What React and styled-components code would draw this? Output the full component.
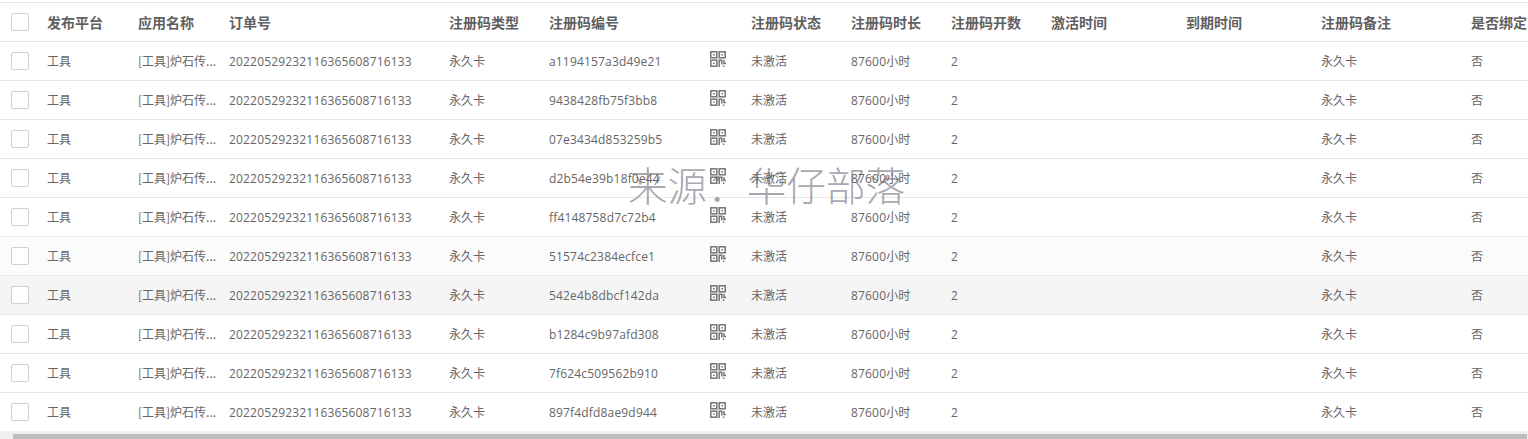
import React from 'react'
import styled, { createGlobalStyle } from 'styled-components'

const GlobalStyle = createGlobalStyle`
  html, body {
    margin: 0;
    padding: 0;
    height: 439px;
    overflow: hidden;
    background: #fff;
  }
`
const Page = styled.div`
  position: relative;
  width: 1528px;
  height: 439px;
  overflow: hidden;
  padding-top: 2px;
  box-sizing: border-box;
  font-family: "Open Sans", "Noto Sans CJK SC", sans-serif;
  font-size: 12px;
  color: #666;
`
const Table = styled.table`
  width: 1600px;
  table-layout: fixed;
  border-collapse: separate;
  border-spacing: 0;
  border-top: 1px solid #e8e8e8;
`
const HeadCell = styled.th`
  height: 39px;
  padding: 0 0 0 12px;
  box-sizing: border-box;
  border-bottom: 1px solid #e8e8e8;
  text-align: left;
  font-family: "Noto Sans CJK SC", sans-serif;
  font-size: 14px;
  font-weight: 700;
  color: #5f5f5f;
  white-space: nowrap;
  overflow: hidden;
`
const Row = styled.tr`
  background: ${p => p.$tone || '#fff'};
`
const Cell = styled.td`
  height: 39px;
  padding: 0 0 0 12px;
  box-sizing: border-box;
  border-bottom: 1px solid #e8e8e8;
  white-space: nowrap;
  overflow: hidden;
  letter-spacing: 0.17px;
`
const Cjk = styled.span`
  letter-spacing: 0;
  font-family: "Noto Sans CJK SC", sans-serif;
`
const CodeCell = styled.div`
  display: flex;
  align-items: center;
  justify-content: space-between;
  padding-right: 13px;
`
const BoxCell = styled.td`
  height: 39px;
  padding: 0 0 0 11px;
  box-sizing: border-box;
  border-bottom: 1px solid #e8e8e8;
`
const BoxHead = styled(BoxCell).attrs({ as: 'th' })`
  text-align: left;
  font-weight: normal;
`
const Check = styled.span`
  display: block;
  width: 18px;
  height: 18px;
  box-sizing: border-box;
  border: 1px solid #d0d0d0;
  border-radius: 2px;
  background: #fff;
`
const QrSvg = styled.svg`
  display: block;
  flex: none;
  margin-top: -4px;
`
const Watermark = styled.div`
  position: absolute;
  left: 628px;
  top: 160px;
  font-family: "Noto Sans CJK SC", sans-serif;
  font-size: 39.6px;
  line-height: 48px;
  font-weight: 300;
  color: rgba(110, 110, 125, 0.62);
  white-space: nowrap;
  pointer-events: none;
`
const Scrollbar = styled.div`
  position: absolute;
  left: 0;
  right: 0;
  bottom: 0;
  height: 8px;
  padding: 3px 1px 0 13px;
  box-sizing: border-box;
  background: #efefef;
`
const Thumb = styled.div`
  height: 100%;
  background: #bdbdbd;
`

const QrIcon = () => (
  <QrSvg width="16" height="16" viewBox="0 0 16 16" fill="none" stroke="#757575" strokeWidth="1.5">
    <rect x="0.8" y="0.8" width="6" height="6" />
    <rect x="9.2" y="0.8" width="6" height="6" />
    <rect x="0.8" y="9.2" width="6" height="6" />
    <path d="M3 3h1.6v1.6H3zM11.4 3H13v1.6h-1.6zM3 11.4h1.6V13H3z" fill="#757575" stroke="none" />
    <path d="M9.2 16V9.2h2.6v4.4M14 9v3.6h2M13.6 14.4V16" />
  </QrSvg>
)

const columns = [35, 91, 91, 220, 100, 202, 100, 100, 100, 135, 135, 150, 141]
const heads = ['发布平台', '应用名称', '订单号', '注册码类型', '注册码编号', '注册码状态', '注册码时长', '注册码开数', '激活时间', '到期时间', '注册码备注', '是否绑定']
const codes = [
  'a1194157a3d49e21',
  '9438428fb75f3bb8',
  '07e3434d853259b5',
  'd2b54e39b18f0e44',
  'ff4148758d7c72b4',
  '51574c2384ecfce1',
  '542e4b8dbcf142da',
  'b1284c9b97afd308',
  '7f624c509562b910',
  '897f4dfd8ae9d944'
]
const tones = { 5: '#fbfbfb', 6: '#f5f5f5' }

const App = () => {
  return (
    <Page>
      <GlobalStyle />
      <Table>
        <colgroup>
          {columns.map((w, i) => <col key={i} style={{ width: w }} />)}
        </colgroup>
        <thead>
          <tr>
            <BoxHead><Check /></BoxHead>
            {heads.map(h => <HeadCell key={h}>{h}</HeadCell>)}
          </tr>
        </thead>
        <tbody>
          {codes.map((code, i) => (
            <Row key={code} $tone={tones[i]}>
              <BoxCell><Check /></BoxCell>
              <Cell><Cjk>工具</Cjk></Cell>
              <Cell><Cjk>[工具]炉石传...</Cjk></Cell>
              <Cell>20220529232116365608716133</Cell>
              <Cell><Cjk>永久卡</Cjk></Cell>
              <Cell>
                <CodeCell>{code}<QrIcon /></CodeCell>
              </Cell>
              <Cell><Cjk>未激活</Cjk></Cell>
              <Cell>87600<Cjk>小时</Cjk></Cell>
              <Cell>2</Cell>
              <Cell />
              <Cell />
              <Cell><Cjk>永久卡</Cjk></Cell>
              <Cell><Cjk>否</Cjk></Cell>
            </Row>
          ))}
        </tbody>
      </Table>
      <Watermark>来源：华仔部落</Watermark>
      <Scrollbar><Thumb /></Scrollbar>
    </Page>
  )
}

export default App
